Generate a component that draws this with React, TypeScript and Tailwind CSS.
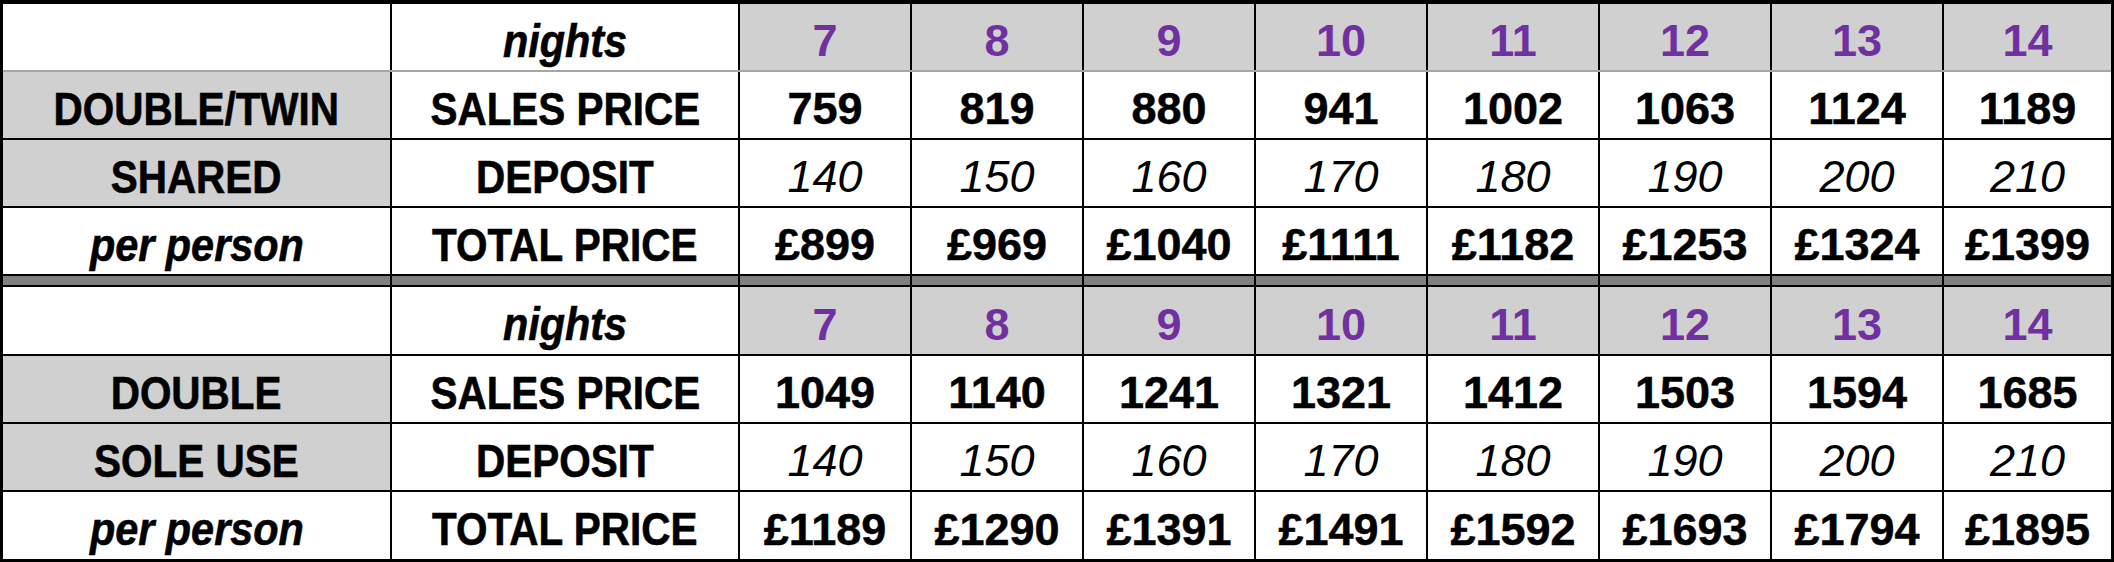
import React from "react";

type Kind = "label" | "labelItalic" | "num" | "italic" | "purple" | "empty";
type Cell = { text: string; kind: Kind; bg: "white" | "gray" };

const nights = [7, 8, 9, 10, 11, 12, 13, 14];

const tables = [
  {
    a: "DOUBLE/TWIN",
    b: "SHARED",
    sales: ["759", "819", "880", "941", "1002", "1063", "1124", "1189"],
    deposit: ["140", "150", "160", "170", "180", "190", "200", "210"],
    total: ["£899", "£969", "£1040", "£1111", "£1182", "£1253", "£1324", "£1399"],
    headerLine: "gray",
  },
  {
    a: "DOUBLE",
    b: "SOLE USE",
    sales: ["1049", "1140", "1241", "1321", "1412", "1503", "1594", "1685"],
    deposit: ["140", "150", "160", "170", "180", "190", "200", "210"],
    total: ["£1189", "£1290", "£1391", "£1491", "£1592", "£1693", "£1794", "£1895"],
    headerLine: "black",
  },
];

function Content({ c }: { c: Cell }) {
  if (c.kind === "empty") return null;
  if (c.kind === "label")
    return (
      <span className="inline-block scale-x-[0.88] font-bold text-black text-[46px] leading-none [-webkit-text-stroke:0.6px_black]">
        {c.text}
      </span>
    );
  if (c.kind === "labelItalic")
    return (
      <span className="inline-block scale-x-[0.9] font-bold italic text-black text-[46px] leading-none [-webkit-text-stroke:0.6px_black]">
        {c.text}
      </span>
    );
  if (c.kind === "purple")
    return <span className="font-bold text-[#7030a0] text-[45px] leading-none">{c.text}</span>;
  if (c.kind === "italic")
    return <span className="font-normal italic text-black text-[45px] leading-none">{c.text}</span>;
  return (
    <span className="font-bold text-black text-[45px] leading-none [-webkit-text-stroke:0.5px_black]">{c.text}</span>
  );
}

function Row({ cells, h }: { cells: Cell[]; h: string }) {
  return (
    <div className={`grid grid-cols-[387px_346px_repeat(7,170px)_167px] gap-x-[2px] ${h}`}>
      {cells.map((c, i) => (
        <div
          key={i}
          className={`flex items-center justify-center pt-[7px] leading-none whitespace-nowrap ${
            c.bg === "gray" ? "bg-[#d0d0d0]" : "bg-white"
          }`}
        >
          <Content c={c} />
        </div>
      ))}
    </div>
  );
}

function Table({ t, first }: { t: (typeof tables)[number]; first: boolean }) {
  const header: Cell[] = [
    { text: "", kind: "empty", bg: "white" },
    { text: "nights", kind: "labelItalic", bg: "white" },
    ...nights.map((n) => ({ text: String(n), kind: "purple" as const, bg: "gray" as const })),
  ];
  const sales: Cell[] = [
    { text: t.a, kind: "label", bg: "gray" },
    { text: "SALES PRICE", kind: "label", bg: "white" },
    ...t.sales.map((s) => ({ text: s, kind: "num" as const, bg: "white" as const })),
  ];
  const deposit: Cell[] = [
    { text: t.b, kind: "label", bg: "gray" },
    { text: "DEPOSIT", kind: "label", bg: "white" },
    ...t.deposit.map((s) => ({ text: s, kind: "italic" as const, bg: "white" as const })),
  ];
  const total: Cell[] = [
    { text: "per person", kind: "labelItalic", bg: "white" },
    { text: "TOTAL PRICE", kind: "label", bg: "white" },
    ...t.total.map((s) => ({ text: s, kind: "num" as const, bg: "white" as const })),
  ];
  return (
    <>
      <Row cells={header} h={first ? "h-[66px]" : "h-[67px]"} />
      {t.headerLine === "gray" ? <div className="h-[2px] bg-[#a6a6a6]" /> : <div className="h-[2px]" />}
      <Row cells={sales} h="h-[66px]" />
      <div className="h-[2px]" />
      <Row cells={deposit} h="h-[66px]" />
      <div className="h-[2px]" />
      <Row cells={total} h={first ? "h-[66px]" : "h-[67px]"} />
    </>
  );
}

export default function App() {
  return (
    <div
      className="w-[2114px] h-[562px] bg-black pt-[4px] pl-[3px] pr-[3px] pb-[3px] flex flex-col"
      style={{ fontFamily: "'Liberation Sans', Arial, sans-serif" }}
    >
      <Table t={tables[0]} first />
      <div className="h-[2px]" />
      <div className="grid grid-cols-[387px_346px_repeat(7,170px)_167px] gap-x-[2px] h-[9px]">
        {Array.from({ length: 10 }).map((_, i) => (
          <div key={i} className="bg-[#808080]" />
        ))}
      </div>
      <div className="h-[2px]" />
      <Table t={tables[1]} first={false} />
    </div>
  );
}
